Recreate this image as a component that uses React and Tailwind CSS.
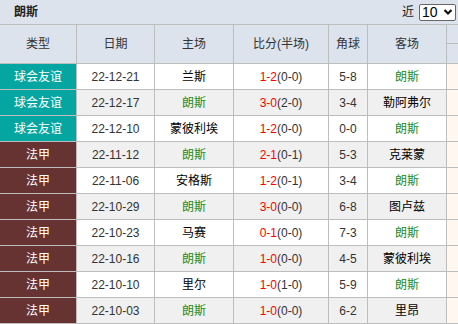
import React from 'react';

const rows = [
  { type: '球会友谊', date: '22-12-21', home: '兰斯', score: '1-2', half: '(0-0)', corner: '5-8', away: '朗斯' },
  { type: '球会友谊', date: '22-12-17', home: '朗斯', score: '3-0', half: '(2-0)', corner: '3-4', away: '勒阿弗尔' },
  { type: '球会友谊', date: '22-12-10', home: '蒙彼利埃', score: '1-2', half: '(0-0)', corner: '0-0', away: '朗斯' },
  { type: '法甲', date: '22-11-12', home: '朗斯', score: '2-1', half: '(0-1)', corner: '5-3', away: '克莱蒙' },
  { type: '法甲', date: '22-11-06', home: '安格斯', score: '1-2', half: '(0-1)', corner: '3-4', away: '朗斯' },
  { type: '法甲', date: '22-10-29', home: '朗斯', score: '3-0', half: '(0-0)', corner: '6-8', away: '图卢兹' },
  { type: '法甲', date: '22-10-23', home: '马赛', score: '0-1', half: '(0-0)', corner: '7-3', away: '朗斯' },
  { type: '法甲', date: '22-10-16', home: '朗斯', score: '1-0', half: '(0-0)', corner: '4-5', away: '蒙彼利埃' },
  { type: '法甲', date: '22-10-10', home: '里尔', score: '1-0', half: '(1-0)', corner: '5-9', away: '朗斯' },
  { type: '法甲', date: '22-10-03', home: '朗斯', score: '1-0', half: '(0-0)', corner: '6-2', away: '里昂' },
];

const team = (name) =>
  name === '朗斯' ? <span className="text-[#228b22]">{name}</span> : <span className="text-black">{name}</span>;

export default function App() {
  return (
    <div
      className="w-[458px] h-[324px] overflow-hidden bg-white text-[12px] text-[#333]"
      style={{ fontFamily: '"Liberation Sans", "Noto Sans CJK SC", sans-serif' }}
    >
      <div className="h-[25px] bg-[#dce3ec] border-b border-[#bdbdbd] flex items-center pl-[14px] pr-[2px]">
        <span className="font-bold text-[#222]">朗斯</span>
        <div className="ml-auto flex items-center gap-[5px]">
          <span className="text-[#222]">近</span>
          <div className="w-[37px] h-[17px] bg-white border border-[#666] rounded-[2px] flex items-center pl-[2px] pr-[2px] text-[14px] text-black leading-none">
            <span>10</span>
            <svg className="ml-auto" width="10" height="8" viewBox="0 0 10 8">
              <path d="M1.5 2 L5 5.5 L8.5 2" fill="none" stroke="#111" strokeWidth="2.2" />
            </svg>
          </div>
        </div>
      </div>

      <div className="h-[39px] flex bg-[#dce3ec] border-b border-[#bdbdbd] text-[#333]">
        <div className="w-[77px] shrink-0 border-r border-[#bdbdbd] flex items-center justify-center">类型</div>
        <div className="w-[78px] shrink-0 border-r border-[#bdbdbd] flex items-center justify-center">日期</div>
        <div className="w-[79px] shrink-0 border-r border-[#bdbdbd] flex items-center justify-center">主场</div>
        <div className="w-[95px] shrink-0 border-r border-[#bdbdbd] flex items-center justify-center">比分(半场)</div>
        <div className="w-[39px] shrink-0 border-r border-[#bdbdbd] flex items-center justify-center">角球</div>
        <div className="w-[79px] shrink-0 border-r border-[#bdbdbd] flex items-center justify-center">客场</div>
        <div className="flex-1 flex flex-col">
          <div className="h-[19px] border-b border-[#bdbdbd]" />
          <div className="flex-1" />
        </div>
      </div>

      {rows.map((r, i) => (
        <div
          key={i}
          className={`h-[26px] flex border-b border-[#bdbdbd] ${i % 2 === 0 ? 'bg-white' : 'bg-[#f0f0f0]'}`}
        >
          <div
            className={`w-[77px] shrink-0 border-r border-[#bdbdbd] flex items-center justify-center text-white ${
              r.type === '法甲' ? 'bg-[#673232]' : 'bg-[#05a6a2]'
            }`}
          >
            {r.type}
          </div>
          <div className="w-[78px] shrink-0 border-r border-[#bdbdbd] flex items-center justify-center">{r.date}</div>
          <div className="w-[79px] shrink-0 border-r border-[#bdbdbd] flex items-center justify-center">{team(r.home)}</div>
          <div className="w-[95px] shrink-0 border-r border-[#bdbdbd] flex items-center justify-center">
            <span className="text-[#ff0000]">{r.score}</span>
            <span>{r.half}</span>
          </div>
          <div className="w-[39px] shrink-0 border-r border-[#bdbdbd] flex items-center justify-center">{r.corner}</div>
          <div className="w-[79px] shrink-0 border-r border-[#bdbdbd] flex items-center justify-center">{team(r.away)}</div>
          <div className="flex-1 bg-[#fff7f0]" />
        </div>
      ))}
    </div>
  );
}
